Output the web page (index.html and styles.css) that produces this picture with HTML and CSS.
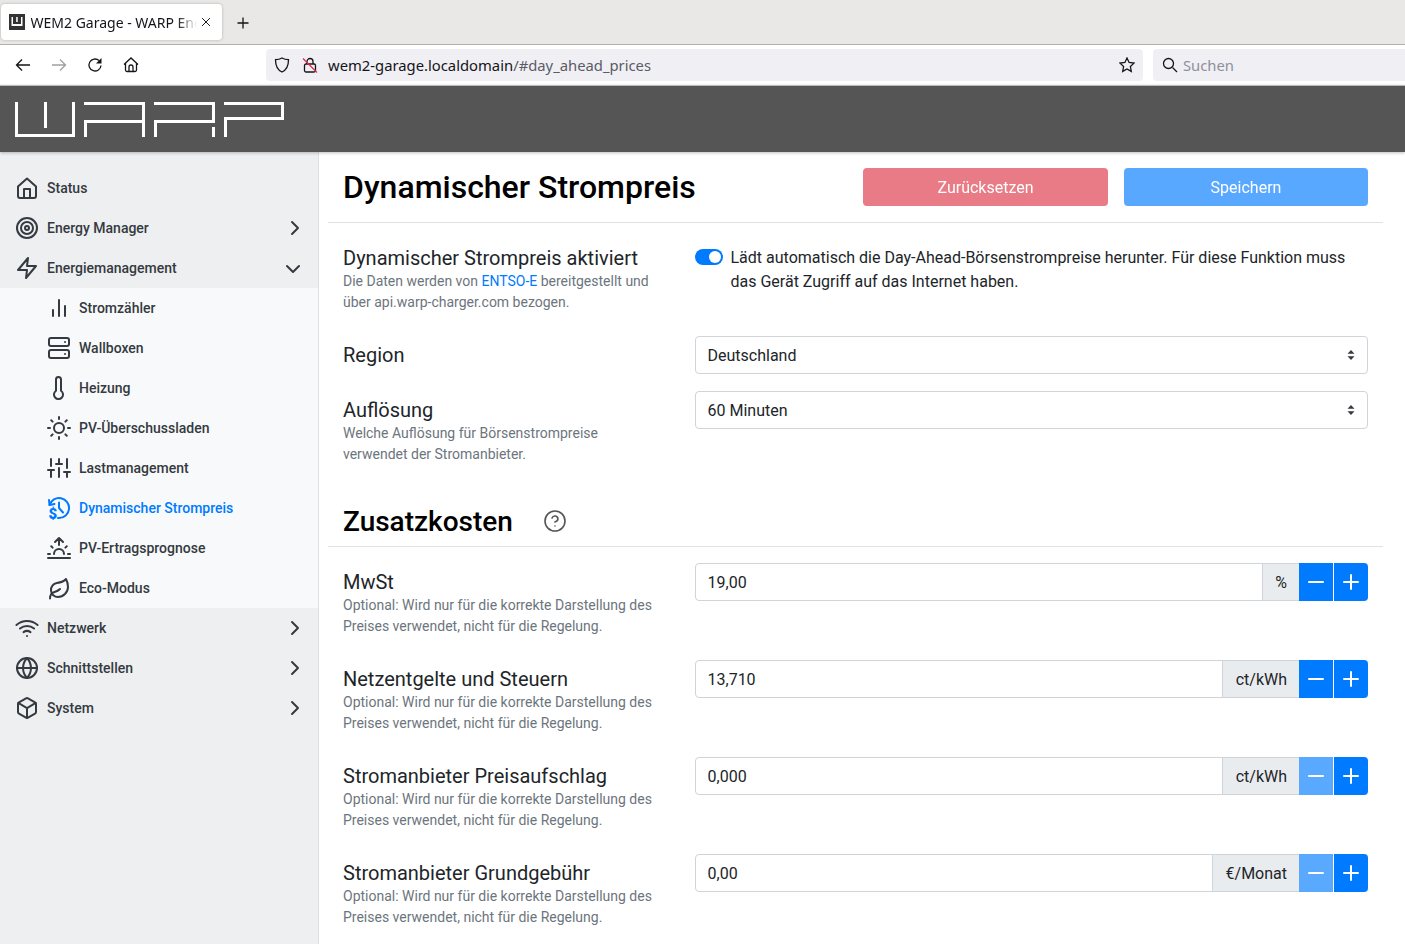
FILE: index.html
```html
<!DOCTYPE html>
<html lang="de">
<head>
    <meta charset="UTF-8">
    <title>WEM2 Garage - WARP Energy Manager</title>
    <link rel="stylesheet" href="styles.css">
</head>
<body>
    <svg class="sprite" width="0" height="0">
        <symbol id="i-home" viewBox="0 0 24 24"><path d="M3 10.500 12 2.500l9 8V20a2 2 0 0 1-2 2H5a2 2 0 0 1-2-2z"/><path d="M9 22V13h6v9"/></symbol>
        <symbol id="i-target" viewBox="0 0 24 24"><circle cx="12" cy="12" r="10"/><circle cx="12" cy="12" r="6"/><circle cx="12" cy="12" r="2"/></symbol>
        <symbol id="i-zap" viewBox="0 0 24 24"><path d="M13 2 3 14h9l-1 8 10-12h-9z"/></symbol>
        <symbol id="i-bars" viewBox="0 0 24 24"><path d="M18 20V10M12 20V4M6 20v-6"/></symbol>
        <symbol id="i-server" viewBox="0 0 24 24"><rect x="2" y="2" width="20" height="8" rx="2"/><rect x="2" y="14" width="20" height="8" rx="2"/><path d="M18 6h.01M18 18h.01"/></symbol>
        <symbol id="i-thermo" viewBox="0 0 24 24"><path d="M14 14.760V3.500a2.500 2.500 0 0 0-5 0v11.260a4.500 4.500 0 1 0 5 0z"/></symbol>
        <symbol id="i-sun" viewBox="0 0 24 24"><circle cx="12" cy="12" r="5"/><path d="M12 1v2M12 21v2M4.220 4.220l1.420 1.420M18.360 18.360l1.420 1.420M1 12h2M21 12h2M4.220 19.780l1.420-1.420M18.360 5.640l1.420-1.420"/></symbol>
        <symbol id="i-sliders" viewBox="0 0 24 24"><path d="M4 21v-7M4 10V3M12 21v-9M12 8V3M20 21v-5M20 12V3M1 14h6M9 8h6M17 16h6"/></symbol>
        <symbol id="i-price" viewBox="0 0 24 24"><path d="M2.500 9A10 10 0 1 1 12 22h-1"/><path d="M2 4 2.500 9l5-1"/><path d="M12 6.500V12l4 4.500"/><text class="solid dollar" x="1.500" y="23">$</text></symbol>
        <symbol id="i-sunrise" viewBox="0 0 24 24"><path d="M17 18a5 5 0 0 0-10 0M12 2v7M4.220 10.220l1.420 1.420M1 18h2M21 18h2M18.360 11.640l1.420-1.420M23 22H1M8 6l4-4 4 4"/></symbol>
        <symbol id="i-leaf" viewBox="0 0 24 24"><path d="M11 20A7 7 0 0 1 9.800 6.100C15.500 5 17 4.480 19 2c1 2 2 4.180 2 8 0 5.500-4.780 10-10 10Z" transform="translate(0 1)"/><path d="M3 22.500c0-3 1.500-5.500 4.500-6.500 2.500-.7 4.500-2 5.500-3"/></symbol>
        <symbol id="i-wifi" viewBox="0 0 24 24"><path d="M5 12.550a11 11 0 0 1 14.080 0M1.420 9a16 16 0 0 1 21.160 0M8.530 16.110a6 6 0 0 1 6.950 0M12 20h.01"/></symbol>
        <symbol id="i-globe" viewBox="0 0 24 24"><circle cx="12" cy="12" r="10"/><path d="M2 12h20M12 2a15.300 15.300 0 0 1 4 10 15.300 15.300 0 0 1-4 10 15.300 15.300 0 0 1-4-10 15.300 15.300 0 0 1 4-10z"/></symbol>
        <symbol id="i-box" viewBox="0 0 24 24"><path d="M21 16V8a2 2 0 0 0-1-1.730l-7-4a2 2 0 0 0-2 0l-7 4A2 2 0 0 0 3 8v8a2 2 0 0 0 1 1.730l7 4a2 2 0 0 0 2 0l7-4A2 2 0 0 0 21 16z"/><path d="M3.270 6.960 12 12.010l8.730-5.050M12 22.080V12"/></symbol>
        <symbol id="i-right" viewBox="0 0 24 24"><path d="m9 18 6-6-6-6"/></symbol>
        <symbol id="i-down" viewBox="0 0 24 24"><path d="m6 9 6 6 6-6"/></symbol>
        <symbol id="i-help" viewBox="0 0 24 24"><circle cx="12" cy="12" r="10"/><path d="M9.090 9a3 3 0 0 1 5.830 1c0 2-3 3-3 3M12 17h.01"/></symbol>
        <symbol id="i-minus" viewBox="0 0 24 24"><path d="M5 12h14"/></symbol>
        <symbol id="i-plus" viewBox="0 0 24 24"><path d="M12 5v14M5 12h14"/></symbol>
        <symbol id="i-updown" viewBox="0 0 10 12"><path class="solid" d="M5 1 8.500 4.800h-7zM5 11 1.500 7.200h7z"/></symbol>
    </svg>

    <!-- Browser frame -->
    <div class="tabbar">
        <div class="tab">
            <svg class="favicon" viewBox="0 0 16 16"><rect width="16" height="16" fill="#333"/><path fill="#fff" d="M2.500 3H4v7h8V3h1.500v9h-11zM7.200 3h1.500v5H7.200z"/></svg>
            <span class="tab-title">WEM2 Garage - WARP Energy Manager</span>
            <svg class="ff-icon tab-close" viewBox="0 0 16 16"><path d="m3.500 3.500 9 9M12.500 3.500l-9 9"/></svg>
        </div>
        <svg class="ff-icon tab-new" viewBox="0 0 16 16"><path d="M8 2.500v11M2.500 8h11"/></svg>
    </div>
    <div class="toolbar">
        <svg class="ff-icon nav-back" viewBox="0 0 16 16"><path d="M15 8H1.500M7 2.500 1.500 8 7 13.500"/></svg>
        <svg class="ff-icon nav-fwd" viewBox="0 0 16 16"><path d="M1 8h13.500M9 2.500 14.500 8 9 13.500"/></svg>
        <svg class="ff-icon nav-reload" viewBox="0 0 16 16"><path d="M14 8.500A6 6 0 1 1 12 3.500"/><path class="solid" d="M14.500 1v5.500H9z"/></svg>
        <svg class="ff-icon nav-home" viewBox="0 0 16 16"><path d="M1 7.500 8 1l7 6.500M2.500 6.500V13a1.500 1.500 0 0 0 1.500 1.500h8a1.500 1.500 0 0 0 1.500-1.500V6.500M6 14.500V10a2 2 0 0 1 4 0v4.500"/></svg>
        <div class="urlbar">
            <svg class="ff-icon" viewBox="0 0 16 16"><path d="M8 1c2 1.200 4 1.700 6.500 1.700 0 5.500-1.500 10-6.500 12.300C3 12.700 1.500 8.200 1.500 2.700 4 2.700 6 2.200 8 1z"/></svg>
            <svg class="ff-icon url-lock" viewBox="0 0 16 16"><rect x="2.500" y="7" width="11" height="8" rx="1.500"/><path d="M5 7V4.500a3 3 0 0 1 6 0V7"/><path class="slash" d="m1 1.500 14 14"/></svg>
            <span class="url-text">wem2-garage.localdomain<span class="url-dim">/#day_ahead_prices</span></span>
            <svg class="ff-icon" viewBox="0 0 16 16"><path d="m8 1 2.100 4.500 4.900.6-3.600 3.400.9 4.900L8 12l-4.300 2.400.9-4.900L1 6.100l4.900-.6z"/></svg>
        </div>
        <div class="searchbar">
            <svg class="ff-icon" viewBox="0 0 16 16"><circle cx="6.500" cy="6.500" r="5"/><path d="m10.500 10.500 4.500 4.500"/></svg>
            <span>Suchen</span>
        </div>
    </div>

    <!-- Page header -->
    <header class="brand">
        <svg class="logo" viewBox="0 0 270 35" fill="#fff">
            <path d="M0 0h3v32h57v3H0zM29 0h3v26h-3zM57 0h3v35h-3z"/>
            <path d="M69 18h3v17h-3zM69 0h61v35h-3V21H69v-3h58V3H69z"/>
            <path d="M139 18h3v17h-3zM139 0h61v21h-61v-3h58V3h-58zM197 25h3v10h-3z"/>
            <path d="M209 15h3v20h-3zM209 0h60v18h-60v-3h57V3h-57z"/>
        </svg>
    </header>

    <div class="layout">
        <nav class="sidebar">
            <a class="nav-item"><svg class="icon"><use href="#i-home"/></svg><span>Status</span></a>
            <a class="nav-item"><svg class="icon"><use href="#i-target"/></svg><span>Energy Manager</span><svg class="icon caret"><use href="#i-right"/></svg></a>
            <a class="nav-item"><svg class="icon"><use href="#i-zap"/></svg><span>Energiemanagement</span><svg class="icon caret caret-open"><use href="#i-down"/></svg></a>
            <div class="subnav">
                <a class="nav-item"><svg class="icon"><use href="#i-bars"/></svg><span>Stromzähler</span></a>
                <a class="nav-item"><svg class="icon"><use href="#i-server"/></svg><span>Wallboxen</span></a>
                <a class="nav-item"><svg class="icon"><use href="#i-thermo"/></svg><span>Heizung</span></a>
                <a class="nav-item"><svg class="icon"><use href="#i-sun"/></svg><span>PV-Überschussladen</span></a>
                <a class="nav-item"><svg class="icon"><use href="#i-sliders"/></svg><span>Lastmanagement</span></a>
                <a class="nav-item active"><svg class="icon"><use href="#i-price"/></svg><span>Dynamischer Strompreis</span></a>
                <a class="nav-item"><svg class="icon"><use href="#i-sunrise"/></svg><span>PV-Ertragsprognose</span></a>
                <a class="nav-item"><svg class="icon"><use href="#i-leaf"/></svg><span>Eco-Modus</span></a>
            </div>
            <a class="nav-item"><svg class="icon"><use href="#i-wifi"/></svg><span>Netzwerk</span><svg class="icon caret"><use href="#i-right"/></svg></a>
            <a class="nav-item"><svg class="icon"><use href="#i-globe"/></svg><span>Schnittstellen</span><svg class="icon caret"><use href="#i-right"/></svg></a>
            <a class="nav-item"><svg class="icon"><use href="#i-box"/></svg><span>System</span><svg class="icon caret"><use href="#i-right"/></svg></a>
        </nav>

        <main class="content">
            <div class="page-head">
                <h1>Dynamischer Strompreis</h1>
                <div class="page-actions">
                    <button class="btn btn-reset">Zurücksetzen</button>
                    <button class="btn btn-save">Speichern</button>
                </div>
            </div>

            <div class="form-row row-toggle">
                <div class="form-label">
                    <label>Dynamischer Strompreis aktiviert</label>
                    <small>Die Daten werden von <a href="#">ENTSO-E</a> bereitgestellt und über api.warp-charger.com bezogen.</small>
                </div>
                <div class="switch-line">
                    <span class="switch"></span>
                    <span>Lädt automatisch die Day-Ahead-Börsenstrompreise herunter. Für diese Funktion muss das Gerät Zugriff auf das Internet haben.</span>
                </div>
            </div>

            <div class="form-row row-region">
                <div class="form-label"><label>Region</label></div>
                <div class="select"><span>Deutschland</span><svg class="updown"><use href="#i-updown"/></svg></div>
            </div>

            <div class="form-row row-res">
                <div class="form-label">
                    <label>Auflösung</label>
                    <small>Welche Auflösung für Börsenstrompreise verwendet der Stromanbieter.</small>
                </div>
                <div class="select"><span>60 Minuten</span><svg class="updown"><use href="#i-updown"/></svg></div>
            </div>

            <div class="sub-head">
                <h2>Zusatzkosten</h2>
                <svg class="icon help"><use href="#i-help"/></svg>
            </div>

            <div class="form-row">
                <div class="form-label">
                    <label>MwSt</label>
                    <small>Optional: Wird nur für die korrekte Darstellung des Preises verwendet, nicht für die Regelung.</small>
                </div>
                <div class="input-group">
                    <input type="text" value="19,00">
                    <span class="unit">%</span>
                    <button class="step"><svg class="icon"><use href="#i-minus"/></svg></button>
                    <button class="step"><svg class="icon"><use href="#i-plus"/></svg></button>
                </div>
            </div>

            <div class="form-row">
                <div class="form-label">
                    <label>Netzentgelte und Steuern</label>
                    <small>Optional: Wird nur für die korrekte Darstellung des Preises verwendet, nicht für die Regelung.</small>
                </div>
                <div class="input-group">
                    <input type="text" value="13,710">
                    <span class="unit">ct/kWh</span>
                    <button class="step"><svg class="icon"><use href="#i-minus"/></svg></button>
                    <button class="step"><svg class="icon"><use href="#i-plus"/></svg></button>
                </div>
            </div>

            <div class="form-row">
                <div class="form-label">
                    <label>Stromanbieter Preisaufschlag</label>
                    <small>Optional: Wird nur für die korrekte Darstellung des Preises verwendet, nicht für die Regelung.</small>
                </div>
                <div class="input-group">
                    <input type="text" value="0,000">
                    <span class="unit">ct/kWh</span>
                    <button class="step" disabled><svg class="icon"><use href="#i-minus"/></svg></button>
                    <button class="step"><svg class="icon"><use href="#i-plus"/></svg></button>
                </div>
            </div>

            <div class="form-row">
                <div class="form-label">
                    <label>Stromanbieter Grundgebühr</label>
                    <small>Optional: Wird nur für die korrekte Darstellung des Preises verwendet, nicht für die Regelung.</small>
                </div>
                <div class="input-group">
                    <input type="text" value="0,00">
                    <span class="unit">€/Monat</span>
                    <button class="step" disabled><svg class="icon"><use href="#i-minus"/></svg></button>
                    <button class="step"><svg class="icon"><use href="#i-plus"/></svg></button>
                </div>
            </div>
        </main>
    </div>
</body>
</html>
```

FILE: styles.css
```css
* {
    box-sizing: border-box;
}
html, body {
    height: 944px;
    overflow: hidden;
}
body {
    margin: 0;
    font-family: Roboto, sans-serif;
    font-size: 16px;
    line-height: 1.5;
    color: #212529;
    background-color: #fff;
}
.sprite {
    position: absolute;
}
.sprite .solid {
    fill: currentColor;
    stroke: none;
}
.sprite .dollar {
    font-family: Roboto, sans-serif;
    font-size: 15px;
    font-weight: 900;
}

/* Browser frame */
.tabbar {
    height: 45px;
    display: flex;
    align-items: flex-start;
    padding: 4px 0 0 1px;
    background-color: #e9e8e6;
    border-bottom: 1px solid #b3b0ac;
}
.tab {
    width: 221px;
    height: 36px;
    display: flex;
    align-items: center;
    padding: 0 9px 0 8px;
    background-color: #fff;
    border-radius: 4px;
    box-shadow: 0 0 3px rgba(0, 0, 0, 0.25);
    font-family: "Noto Sans", sans-serif;
    font-size: 14px;
    color: #15141a;
}
.favicon {
    width: 16px;
    height: 16px;
    flex: none;
    margin-right: 5.500px;
}
.tab-title {
    flex: 1;
    overflow: hidden;
    white-space: nowrap;
    -webkit-mask-image: linear-gradient(to right, #000 88%, transparent);
    mask-image: linear-gradient(to right, #000 88%, transparent);
}
.ff-icon {
    width: 16px;
    height: 16px;
    flex: none;
    fill: none;
    stroke: #15141a;
    stroke-width: 1.3;
}
.ff-icon .solid {
    fill: #15141a;
    stroke: none;
}
.ff-icon .slash {
    stroke: #e22850;
}
.tab-close {
    width: 14px;
    height: 14px;
    margin-left: 2px;
    stroke-width: 1.100;
}
.tab-new {
    margin: 11px 0 0 13px;
}
.toolbar {
    height: 40px;
    display: flex;
    align-items: center;
    padding-left: 15px;
    background-color: #fff;
    font-family: "Noto Sans", sans-serif;
    font-size: 14.800px;
}
.nav-fwd {
    margin-left: 20px;
    stroke: #a0a0a3;
}
.nav-reload {
    margin-left: 20px;
}
.nav-home {
    margin-left: 20px;
}
.urlbar {
    width: 877px;
    height: 32px;
    margin-left: 127px;
    display: flex;
    align-items: center;
    padding: 0 8px 0 8px;
    background-color: #f0f0f4;
    border-radius: 4px;
    color: #15141a;
}
.url-lock {
    margin-left: 12px;
}
.url-text {
    flex: 1;
    margin-left: 10px;
    white-space: nowrap;
}
.url-dim {
    color: #5b5b66;
}
.searchbar {
    flex: 1;
    height: 32px;
    margin-left: 10px;
    display: flex;
    align-items: center;
    gap: 5px;
    padding-left: 9px;
    background-color: #f0f0f4;
    border-radius: 4px 0 0 4px;
    color: #8f8f9d;
}

/* Page header */
.brand {
    height: 67px;
    padding: 16px 0 0 15px;
    background-color: #555;
    box-shadow: 0 1px 3px rgba(0, 0, 0, 0.25);
    border-top: 1px solid #bbb;
    position: relative;
}
.logo {
    display: block;
    width: 270px;
    height: 35px;
}

.layout {
    display: flex;
    height: 792px;
}

/* Sidebar */
.sidebar {
    width: 319px;
    flex: none;
    padding-top: 16px;
    background-color: #eeeff1;
    border-right: 1px solid #dfe0e2;
}
.icon {
    width: 24px;
    height: 24px;
    flex: none;
    fill: none;
    stroke: currentColor;
    stroke-width: 2;
    stroke-linecap: round;
    stroke-linejoin: round;
}
.nav-item {
    height: 40px;
    display: flex;
    align-items: center;
    padding: 0 11px 0 15px;
    font-size: 14px;
    font-weight: 500;
    color: #343a40;
}
.nav-item .icon {
    margin-right: 8px;
}
.nav-item .caret {
    margin: 0 0 0 auto;
}
.nav-item .caret-open {
    position: relative;
    left: -2px;
    top: 1px;
}
.subnav {
    background-color: #f8f9fb;
}
.subnav .nav-item {
    padding-left: 47px;
}
.nav-item.active {
    color: #007bff;
}

/* Main content */
.content {
    flex: 1;
    padding: 0 22px 0 9px;
}
.page-head {
    height: 71px;
    display: flex;
    align-items: flex-start;
    justify-content: space-between;
    padding: 16px 15px 0;
    border-bottom: 1px solid #dee2e6;
    margin-bottom: 23px;
}
h1 {
    margin: 0;
    font-size: 32px;
    font-weight: 500;
    line-height: 38px;
    color: #000;
}
.page-actions {
    display: flex;
    gap: 16px;
}
.btn {
    height: 38px;
    width: 245px;
    border: none;
    border-radius: 4px;
    font-family: inherit;
    font-size: 16px;
    color: #fff;
    opacity: 0.65;
}
.btn-save {
    width: 244px;
}
.btn-reset {
    background-color: #dc3545;
}
.btn-save {
    background-color: #007bff;
}
.form-row {
    display: grid;
    grid-template-columns: 336.500px 673.500px;
    column-gap: 15px;
    padding-left: 15px;
    margin-bottom: 23px;
}
.row-toggle {
    margin-bottom: 23px;
}
.row-region {
    margin-bottom: 17px;
}
.row-res {
    margin-bottom: 0;
}
.form-label label {
    display: block;
    font-size: 20px;
    line-height: 24px;
    margin-top: 7px;
    color: #212529;
}
.row-toggle .form-label label {
    margin-top: 0;
}
.form-label small {
    display: block;
    max-width: 315px;
    margin-top: 1px;
    font-size: 14px;
    line-height: 21px;
    color: #6c757d;
}
.form-label small a {
    color: #007bff;
    text-decoration: none;
}
.switch-line {
    display: flex;
    align-items: flex-start;
    gap: 8px;
}
.switch {
    flex: none;
    width: 28px;
    height: 16px;
    margin-top: 3px;
    border-radius: 8px;
    background-color: #007bff;
    position: relative;
}
.switch::after {
    content: "";
    position: absolute;
    top: 2px;
    right: 2px;
    width: 12px;
    height: 12px;
    border-radius: 50%;
    background-color: #fff;
}
.select {
    height: 38px;
    display: flex;
    align-items: center;
    justify-content: space-between;
    padding: 1px 11px 0 12px;
    border: 1px solid #ced4da;
    border-radius: 4px;
    color: #212529;
}
.updown {
    width: 10px;
    height: 12px;
    color: #343a40;
    position: relative;
    top: -1px;
}
.sub-head {
    height: 55px;
    display: flex;
    align-items: flex-start;
    gap: 30px;
    margin: 27px 0 16px;
    padding: 12px 15px 0;
    border-bottom: 1px solid #dee2e6;
}
h2 {
    margin: 0;
    font-size: 28px;
    font-weight: 500;
    line-height: 36px;
    color: #000;
}
.sub-head .help {
    margin-top: 5px;
    color: #555;
    stroke-width: 1.600;
}
.input-group {
    height: 38px;
    display: flex;
}
.input-group input {
    flex: 1;
    min-width: 0;
    height: 38px;
    padding: 0 12px;
    border: 1px solid #ced4da;
    border-radius: 4px 0 0 4px;
    font-family: inherit;
    font-size: 16px;
    color: #212529;
}
.unit {
    display: flex;
    align-items: center;
    padding: 1px 12px 0 12.400px;
    margin-left: -1px;
    background-color: #e9ecef;
    border: 1px solid #ced4da;
    border-right: none;
}
.step {
    width: 34px;
    height: 38px;
    display: flex;
    align-items: center;
    justify-content: center;
    padding: 0;
    border: none;
    background-color: #007bff;
    color: #fff;
}
.step + .step {
    margin-left: 1px;
    border-radius: 0 4px 4px 0;
}
.step[disabled] {
    background-color: #59a9ff;
    color: #fff;
}
```
